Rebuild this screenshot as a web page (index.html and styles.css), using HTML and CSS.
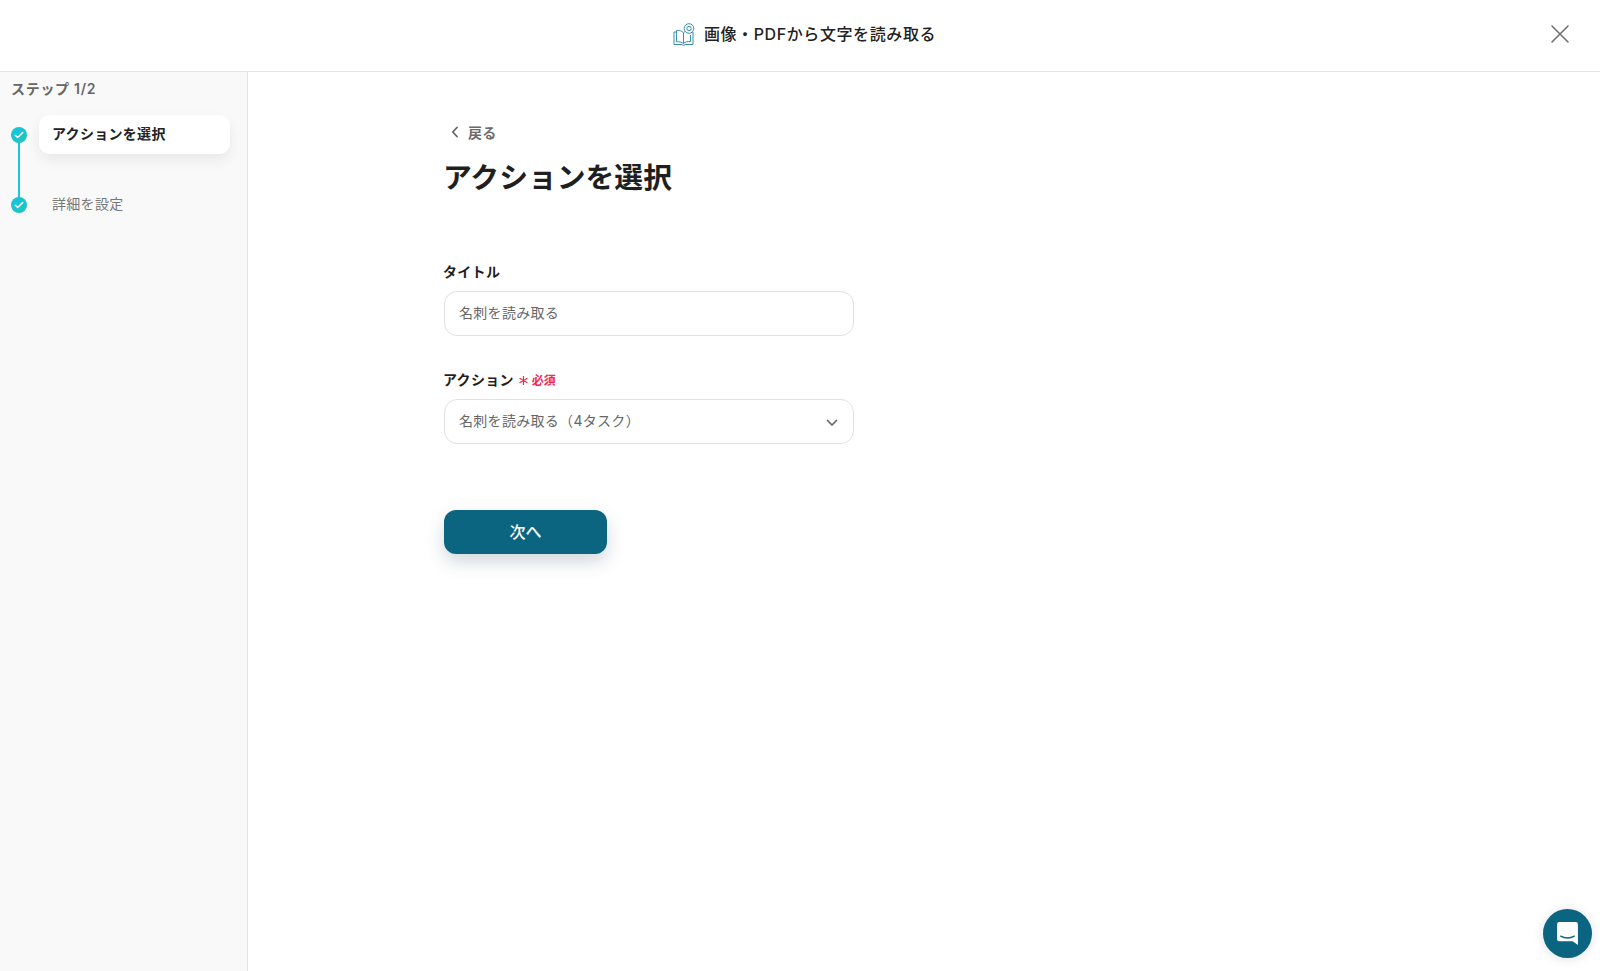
FILE: index.html
```html
<!DOCTYPE html>
<html lang="ja">
<head>
<meta charset="utf-8">
<title>画像・PDFから文字を読み取る</title>
<link rel="stylesheet" href="styles.css">
</head>
<body>
<header class="topbar">
  <div class="topbar-title">
    <svg class="book-icon" width="22" height="24" viewBox="0 0 22 24" fill="none" stroke="#3a8da8" stroke-width="1" stroke-linejoin="round">
      <path d="M3.500 7.500c3-.4 5.700.4 7 2.300v11c-1.300-1.600-4-2.200-7-2z"/>
      <path d="M3.500 9H1v12.500h8.200l1.300 1.500 1.300-1.500H20V9h-1.500"/>
      <path d="M10.500 9.800c.6-.9 1.500-1.500 2.600-1.900M17.500 12v6.500c-2.800-.2-5.700.4-7 2"/>
      <circle cx="16" cy="5.500" r="4.800" fill="#fff"/>
      <circle cx="16" cy="5.500" r="2.200"/>
    </svg>
    <span>画像・PDFから文字を読み取る</span>
  </div>
  <button class="close" type="button" aria-label="閉じる">
    <svg width="18" height="18" viewBox="0 0 18 18" fill="none" stroke="#6f6f6f" stroke-width="1.600" stroke-linecap="round"><path d="M1 1l16 16M17 1L1 17"/></svg>
  </button>
</header>
<div class="layout">
  <aside class="sidebar">
    <div class="step-count">ステップ 1/2</div>
    <ol class="steps">
      <li class="step step-active">
        <span class="step-dot"><svg width="10" height="8" viewBox="0 0 10 8" fill="none" stroke="#fff" stroke-width="1.500" stroke-linecap="round" stroke-linejoin="round"><path d="M1.200 4.200l2.500 2.300 5-5"/></svg></span>
        <span class="step-label">アクションを選択</span>
      </li>
      <li class="step">
        <span class="step-dot"><svg width="10" height="8" viewBox="0 0 10 8" fill="none" stroke="#fff" stroke-width="1.500" stroke-linecap="round" stroke-linejoin="round"><path d="M1.200 4.200l2.500 2.300 5-5"/></svg></span>
        <span class="step-label">詳細を設定</span>
      </li>
    </ol>
  </aside>
  <main class="content">
    <a class="back" href="#">
      <svg width="8" height="12" viewBox="0 0 8 12" fill="none" stroke="#666" stroke-width="1.800" stroke-linecap="round" stroke-linejoin="round"><path d="M6 1.500L1.800 6 6 10.500"/></svg>
      <span>戻る</span>
    </a>
    <h1 class="heading">アクションを選択</h1>
    <div class="field field-title">
      <label class="field-label">タイトル</label>
      <div class="control control-text">名刺を読み取る</div>
    </div>
    <div class="field field-action">
      <label class="field-label">アクション<span class="required"><svg class="asterisk" width="9" height="9" viewBox="0 0 9 9" fill="none" stroke="#f5264f" stroke-width="1.200" stroke-linecap="round"><path d="M4.500.5v8M1 2.500l7 4M8 2.500l-7 4"/></svg>必須</span></label>
      <div class="control control-select">
        <span>名刺を読み取る（4タスク）</span>
        <svg class="chevron" width="12" height="8" viewBox="0 0 12 8" fill="none" stroke="#666" stroke-width="1.700" stroke-linecap="round" stroke-linejoin="round"><path d="M1.500 1.500L6 6l4.500-4.500"/></svg>
      </div>
    </div>
    <button class="next" type="button">次へ</button>
  </main>
</div>
<button class="chat" type="button" aria-label="チャット">
  <svg width="23" height="25" viewBox="0 0 22 24"><path fill="#fff" d="M3 1h16a2 2 0 0 1 2 2v20l-5-3.500H3a2 2 0 0 1-2-2V3a2 2 0 0 1 2-2z"/><path d="M4.500 14.500c3.800 2.400 9.200 2.400 13 0" fill="none" stroke="#0b6580" stroke-width="1.300" stroke-linecap="round"/></svg>
</button>
</body>
</html>
```

FILE: styles.css
```css
* { box-sizing: border-box; }
html, body { height: 100%; }
body {
  margin: 0;
  display: flex;
  flex-direction: column;
  background: #fff;
  color: #1f1f1f;
  font-family: Inter, "Noto Sans CJK JP", "Noto Sans", sans-serif;
  letter-spacing: .3px;
  overflow: hidden;
}
.topbar {
  flex: none;
  height: 72px;
  border-bottom: 1px solid #e4e4e4;
  display: flex;
  align-items: center;
  justify-content: center;
  position: relative;
  padding-bottom: 6px;
}
.topbar-title {
  display: flex;
  align-items: center;
  gap: 9px;
  margin-left: 9px;
  font-size: 16px;
  letter-spacing: .6px;
  font-weight: 500;
  color: #222;
}
.book-icon { display: block; margin-top: 4px; }
.close {
  position: absolute;
  top: 25px;
  right: 31px;
  width: 18px;
  height: 18px;
  padding: 0;
  border: 0;
  background: none;
  line-height: 0;
}
.layout { flex: 1; display: flex; min-height: 0; }
.sidebar {
  flex: none;
  width: 248px;
  background: #f9f9f9;
  border-right: 1px solid #e4e4e4;
  padding: 7px 17px 0 11px;
}
.step-count {
  font-size: 14px;
  font-weight: 600;
  line-height: 20px;
  letter-spacing: .7px;
  color: #666;
}
.steps {
  list-style: none;
  margin: 16px 0 0;
  padding: 0;
  display: flex;
  flex-direction: column;
  gap: 31px;
}
.step {
  display: flex;
  align-items: center;
  gap: 12px;
  height: 39px;
  position: relative;
}
.step-active::after {
  content: "";
  position: absolute;
  left: 7px;
  top: 27px;
  width: 2px;
  height: 56px;
  background: #1cc6d8;
}
.step-dot {
  flex: none;
  width: 16px;
  height: 16px;
  border-radius: 50%;
  background: linear-gradient(135deg, #14c4e0, #22c3b8);
  display: flex;
  align-items: center;
  justify-content: center;
  position: relative;
  z-index: 1;
}
.step-label {
  flex: 1;
  height: 39px;
  display: flex;
  align-items: center;
  padding: 0 13px 3px;
  border-radius: 10px;
  font-size: 14px;
  color: #777;
}
.step-active .step-label {
  background: #fff;
  color: #222;
  font-weight: 600;
  box-shadow: 0 6px 14px rgba(0, 0, 0, .07);
}
.content { flex: 1; padding: 50px 0 0 196px; }
.back {
  display: flex;
  align-items: center;
  gap: 9px;
  padding: 0 0 1px 7px;
  height: 20px;
  font-size: 14px;
  font-weight: 600;
  color: #6b6b6b;
  text-decoration: none;
}
.heading {
  margin: 16px 0 0 -1px;
  font-size: 28.800px;
  letter-spacing: 0;
  line-height: 40px;
  font-weight: 600;
  color: #1f1f1f;
}
.field { width: 410px; }
.field-title { margin-top: 63px; }
.field-action { margin-top: 33px; }
.field-label {
  display: flex;
  align-items: center;
  height: 20px;
  margin-left: -1px;
  font-size: 14px;
  font-weight: 600;
  color: #1f1f1f;
}
.required {
  display: flex;
  align-items: center;
  margin-left: 5px;
  font-size: 12px;
  letter-spacing: 0;
  color: #f5264f;
}
.asterisk { margin: 2px 4px 0 0; }
.control {
  margin-top: 10px;
  height: 45px;
  padding: 0 14px;
  border: 1px solid #dfe1e8;
  border-radius: 13px;
  background: #fff;
  display: flex;
  align-items: center;
  font-size: 14px;
  color: #666;
}
.control-text { padding-bottom: 3px; }
.control-select { justify-content: space-between; padding: 0 15px 3px 14px; }
.chevron { margin-top: 5px; }
.next {
  display: block;
  margin-top: 66px;
  width: 163px;
  height: 44px;
  padding: 0 0 2px;
  border: 0;
  border-radius: 12px;
  background: #0b6580;
  color: #fff;
  font: 500 16px Inter, "Noto Sans CJK JP", sans-serif;
  box-shadow: 0 8px 18px rgba(30, 60, 80, .2);
}
.chat {
  position: absolute;
  left: 1543px;
  top: 909px;
  width: 49px;
  height: 49px;
  padding: 0;
  border: 0;
  border-radius: 50%;
  background: #0b6580;
  display: flex;
  align-items: center;
  justify-content: center;
  box-shadow: 0 1px 12px rgba(0, 0, 0, .12);
}
```
